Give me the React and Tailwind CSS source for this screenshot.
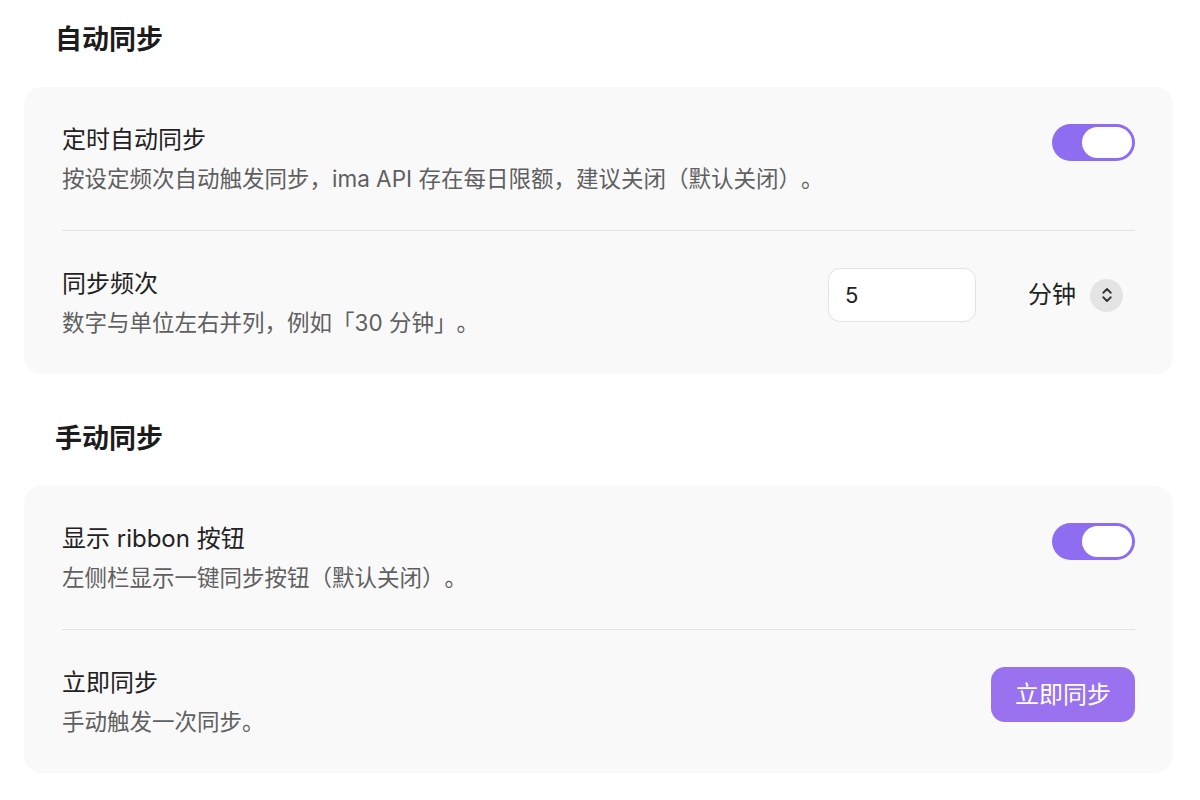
import { ChevronsUpDown } from 'lucide-react'

function Toggle({ on = true }) {
  return (
    <div className={`mt-[2px] flex h-[37px] w-[83px] shrink-0 items-center rounded-full p-[3px] ${on ? 'justify-end bg-[#8e6df0]' : 'justify-start bg-[#d9d9d9]'}`}>
      <div className="h-[31px] w-[50px] rounded-full bg-white" />
    </div>
  )
}

function Row({ title, desc, first, children }) {
  return (
    <div className={`flex items-start justify-between py-[35px] ${first ? '' : 'border-t border-[#e3e3e3]'}`}>
      <div className="min-w-0">
        <div className="text-[24px] leading-[36px] text-[#222222]">{title}</div>
        <div className="mt-[4px] text-[22.5px] leading-[33px] text-[#5f5f5f] [text-spacing-trim:space-all]">{desc}</div>
      </div>
      {children}
    </div>
  )
}

function Section({ title, first, children }) {
  return (
    <section>
      <h2 className={`ml-[55px] mb-[27px] text-[27px] font-bold leading-[40px] text-[#1c1c1c] ${first ? '' : 'mt-[45px]'}`}>
        {title}
      </h2>
      <div className="ml-[24px] mr-[27px] rounded-[18px] bg-[#f9f9f9] px-[38px]">{children}</div>
    </section>
  )
}

export default function App() {
  return (
    <div className="min-h-[800px] bg-white pt-[20px] font-['Inter','Noto_Sans_CJK_SC',sans-serif]">
      <Section title="自动同步" first>
        <Row first title="定时自动同步" desc="按设定频次自动触发同步，ima API 存在每日限额，建议关闭（默认关闭）。">
          <Toggle />
        </Row>
        <Row title="同步频次" desc="数字与单位左右并列，例如「30 分钟」。">
          <div className="mt-[2px] flex items-center">
            <input
              defaultValue="5"
              className="h-[54px] w-[148px] rounded-[12px] border border-[#e2e2e2] bg-white px-[16px] text-[22px] text-[#222222] outline-none"
            />
            <div className="ml-[52px] flex items-center gap-[14px] pr-[12px]">
              <span className="text-[24px] text-[#222222]">分钟</span>
              <span className="flex h-[33px] w-[33px] items-center justify-center rounded-full bg-[#e4e4e4]">
                <ChevronsUpDown size={18} strokeWidth={2.4} className="text-[#333333]" />
              </span>
            </div>
          </div>
        </Row>
      </Section>
      <Section title="手动同步">
        <Row first title="显示 ribbon 按钮" desc="左侧栏显示一键同步按钮（默认关闭）。">
          <Toggle />
        </Row>
        <Row title="立即同步" desc="手动触发一次同步。">
          <button className="mt-[2px] h-[55px] rounded-[14px] bg-[#9a72f0] px-[24px] text-[24px] text-white">
            立即同步
          </button>
        </Row>
      </Section>
    </div>
  )
}
